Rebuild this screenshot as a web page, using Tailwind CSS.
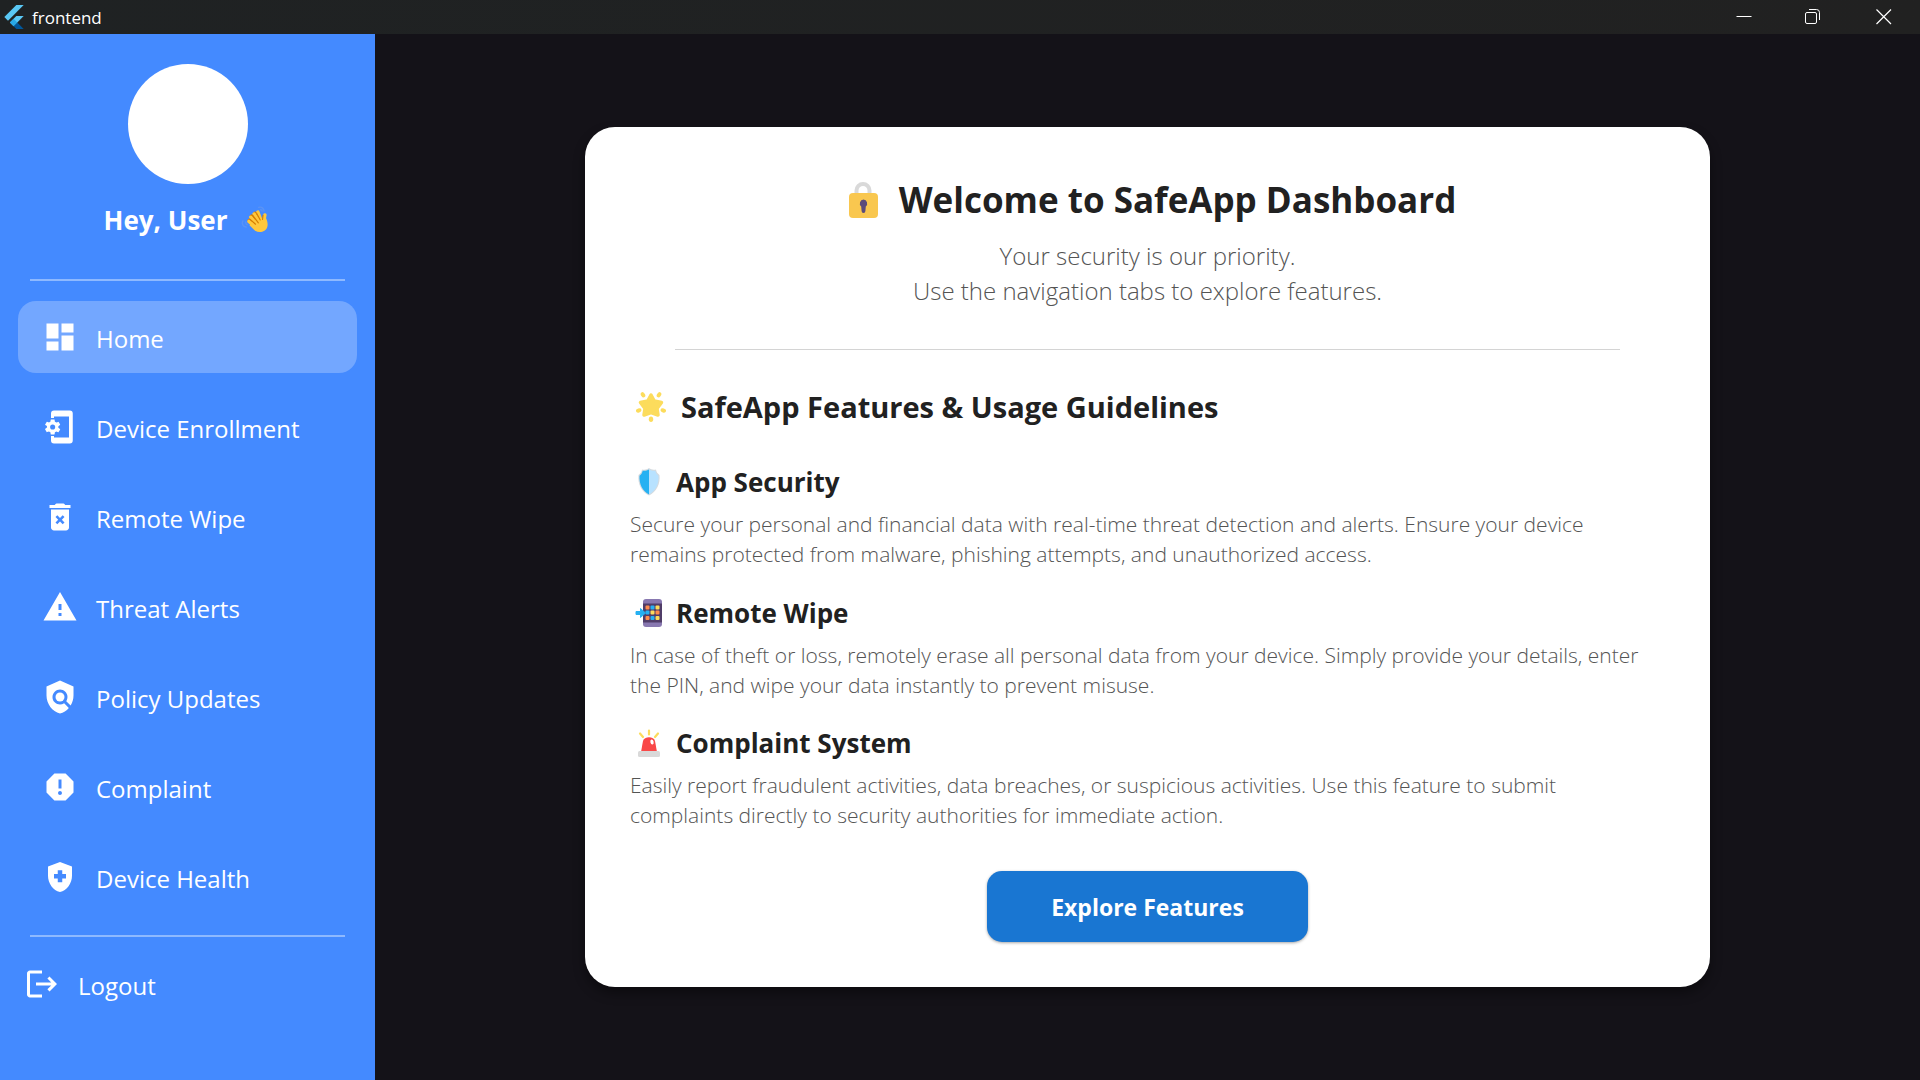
<!DOCTYPE html>
<html lang="en">
<head>
<meta charset="utf-8">
<title>frontend</title>
<script src="https://cdn.jsdelivr.net/npm/@tailwindcss/browser@4"></script>
</head>
<body class="flex min-h-screen flex-col bg-[#141218] font-['Open_Sans','Noto_Sans',sans-serif]">

<header class="flex h-[34px] shrink-0 items-center justify-between bg-linear-to-r from-[#1f2223] to-[#212121] text-white">
  <div class="flex items-center gap-1.5 pl-0.5">
    <svg class="size-6" viewBox="0 0 24 24"><path fill="#5ac8f5" d="M14.3 0 2.3 12 6 15.7 21.7 0z"/><path fill="#5ac8f5" d="M14.3 11.1 7.9 17.5l3.7 3.7 10.1-10.1z"/><path fill="#01579b" d="m11.6 21.2 2.7 2.8h7.4l-6.4-6.5z"/><path fill="#29a9e8" d="m7.9 17.5 3.7-3.7 3.7 3.7-3.7 3.7z"/></svg>
    <span class="pt-0.5 text-[17px] leading-6">frontend</span>
  </div>
  <div class="flex h-full">
    <button class="flex w-[69px] items-center justify-center" aria-label="Minimize"><svg class="size-4" viewBox="0 0 16 16"><path stroke="#fff" d="M.5 7.5h15"/></svg></button>
    <button class="flex w-[69px] items-center justify-center" aria-label="Restore"><svg class="size-4" viewBox="0 0 16 16" fill="none" stroke="#fff"><rect x=".5" y="3.500" width="11" height="11" rx="1.5"/><path d="M4 .5h7.500a3 3 0 0 1 3 3V11"/></svg></button>
    <button class="flex w-[73px] items-center justify-center" aria-label="Close"><svg class="size-4" viewBox="0 0 16 16"><path stroke="#fff" stroke-width="1.2" d="m.5.5 14.500 14.500m0-14.500L.5 15"/></svg></button>
  </div>
</header>

<div class="flex flex-1">
  <aside class="flex w-[375px] shrink-0 flex-col bg-[#448aff] text-white">
    <div class="flex flex-col items-center pt-[30px]">
      <div class="size-[120px] rounded-full bg-white"></div>
      <p class="mt-[18px] flex items-center gap-[14px] text-[26px] leading-9 font-bold">Hey, User
        <svg class="size-[30px]" viewBox="0 0 32 32"><path fill="none" stroke="#5a93f5" stroke-width="1.500" stroke-linecap="round" d="M19 2.500c3-1 5.500 1 5.500 4M21 5c1 0 1.500.5 1.500 1.500M2 17c-1.500 3 0 6 3.500 6.500M5 18c0 1.500.5 2.500 1.500 3"/><g stroke="#d67d00" stroke-width="4" stroke-linecap="round"><path d="m9 16.500 8 6M11.500 12l7 9M15 9l6 11"/></g><g stroke="#ffc83d" stroke-width="3.600" stroke-linecap="round"><path d="m8.500 17.500 8 7M10.500 13l7.500 9.500M14 9.500l6.500 11M18 7.500l4.500 12M25.500 10.500 24 19"/></g><path fill="#ffc83d" d="m14 16 8 .5 4.500-3c1.500 3 2.500 7 1.500 10-1.500 5-8 7-13 4l-6-6z"/><path fill="none" stroke="#d67d00" stroke-width="1.200" stroke-linecap="round" d="m9.500 15 6 5.500M12.500 11l6 8M16.500 8.500l4 7.500M23.500 11l-.5 4.500"/></svg>
      </p>
    </div>
    <hr class="mx-[30px] mt-[41px] mb-5 border-0 border-t-2 border-white/40">
    <nav class="flex flex-col gap-[18px] px-[18px] text-[24px]">
      <a href="#" class="flex h-[72px] items-center gap-[18px] rounded-[18px] bg-white/25 px-6">
        <svg class="size-9" viewBox="0 0 24 24" fill="currentColor"><path d="M3 13h8V3H3v10zm0 8h8v-6H3v6zm10 0h8V11h-8v10zm0-18v6h8V3h-8z"/></svg><span class="pt-1">Home</span></a>
      <a href="#" class="flex h-[72px] items-center gap-[18px] px-6">
        <svg class="size-9" viewBox="0 0 24 24" fill="currentColor"><path d="M8 1h10.500a2 2 0 0 1 2 2v18a2 2 0 0 1-2 2H8a2 2 0 0 1-2-2v-3h2v1h10V5H8v1H6V3a2 2 0 0 1 2-2z"/><path fill-rule="evenodd" transform="translate(-.9)" d="M11.800 12.500v-1l1.100-.8c.1-.1.1-.2.1-.3l-1-1.700c-.1-.1-.2-.2-.3-.1l-1.300.4c-.3-.2-.6-.4-.9-.5l-.2-1.300c0-.1-.1-.2-.3-.2H7c-.1 0-.2.1-.3.2l-.2 1.300c-.3.1-.6.3-.9.5l-1.300-.5c-.1 0-.2 0-.3.1l-1 1.700c-.1.1 0 .2.1.3l1.100.8v1l-1.100.8c-.1.2-.1.3-.1.4l1 1.700c.1.1.2.2.3.1l1.300-.4c.3.2.6.4.9.5l.2 1.300c0 .1.1.2.3.2h2c.1 0 .2-.1.3-.2l.2-1.300c.3-.1.6-.3.9-.5l1.300.5c.1 0 .2 0 .3-.1l1-1.700c.1-.1 0-.2-.1-.3zM8 13.700a1.700 1.700 0 1 1 0-3.400 1.700 1.700 0 0 1 0 3.400z"/></svg><span class="pt-1">Device Enrollment</span></a>
      <a href="#" class="flex h-[72px] items-center gap-[18px] px-6">
        <svg class="size-9" viewBox="0 0 24 24" fill="currentColor"><path fill-rule="evenodd" d="M6 19c0 1.100.9 2 2 2h8c1.100 0 2-.9 2-2V7H6zm3-7 1.200-1.200L12 12.600l1.800-1.800L15 12l-1.800 1.800 1.800 1.800-1.200 1.200-1.800-1.800-1.800 1.800L9 15.600l1.800-1.800zM15.500 4c-.6-.7-1-1-1.700-1h-3.600c-.7 0-1.100.3-1.700 1H5v2h14V4z"/></svg><span class="pt-1">Remote Wipe</span></a>
      <a href="#" class="flex h-[72px] items-center gap-[18px] px-6">
        <svg class="size-9" viewBox="0 0 24 24" fill="currentColor"><path d="M1 21h22L12 2 1 21zm12-3h-2v-2h2v2zm0-4h-2v-4h2v4z"/></svg><span class="pt-1">Threat Alerts</span></a>
      <a href="#" class="flex h-[72px] items-center gap-[18px] px-6">
        <svg class="size-9" viewBox="0 0 24 24" fill="currentColor"><path d="M21 5l-9-4-9 4v6c0 5.550 3.840 10.740 9 12 2.300-.56 4.330-1.900 5.880-3.710l-3.120-3.120c-1.940 1.290-4.580 1.070-6.290-.64-1.950-1.950-1.950-5.120 0-7.070 1.950-1.950 5.120-1.950 7.070 0 1.710 1.710 1.920 4.350.64 6.290l2.900 2.900C20.290 15.690 21 13.380 21 11V5z"/><circle cx="12" cy="12" r="3"/></svg><span class="pt-1">Policy Updates</span></a>
      <a href="#" class="flex h-[72px] items-center gap-[18px] px-6">
        <svg class="size-9" viewBox="0 0 24 24" fill="currentColor"><path d="M15.730 3H8.270L3 8.270v7.460L8.270 21h7.460L21 15.730V8.270L15.730 3zM12 17.300c-.72 0-1.300-.58-1.300-1.300 0-.72.58-1.300 1.300-1.300.72 0 1.300.58 1.300 1.300 0 .72-.58 1.300-1.300 1.300zm1-4.300h-2V7h2v6z"/></svg><span class="pt-1">Complaint</span></a>
      <a href="#" class="flex h-[72px] items-center gap-[18px] px-6">
        <svg class="size-9" viewBox="0 0 24 24" fill="currentColor"><path fill-rule="evenodd" d="M10.500 13H8v-3h2.500V7.500h3V10H16v3h-2.500v2.500h-3V13zM12 2L4 5v6.090c0 5.050 3.410 9.760 8 10.910 4.590-1.150 8-5.860 8-10.910V5l-8-3z"/></svg><span class="pt-1">Device Health</span></a>
    </nav>
    <hr class="mx-[30px] mt-[22px] mb-[11px] border-0 border-t-2 border-white/40">
    <a href="#" class="flex h-[72px] items-center gap-[18px] px-6 text-[24px]">
      <svg class="size-9" viewBox="0 0 24 24" fill="currentColor"><path d="M17 7l-1.410 1.410L18.170 11H8v2h10.170l-2.580 2.580L17 17l5-5zM4 5h8V3H4c-1.100 0-2 .9-2 2v14c0 1.100.9 2 2 2h8v-2H4V5z"/></svg><span class="pt-1">Logout</span></a>
  </aside>

  <main class="flex flex-1 items-center justify-center">
    <section class="flex w-full max-w-[1125px] flex-col rounded-[30px] bg-white p-[45px] text-[#212121] shadow-[0_6px_12px_rgba(0,0,0,0.4)]">
      <h1 class="flex items-center justify-center gap-5 text-[35px] leading-[56px] font-bold">
        <svg class="ml-2 h-9 w-8" viewBox="0 0 32 36"><path fill="none" stroke="#d9d9d9" stroke-width="4" d="M9.500 14V8.500a6.500 6.500 0 0 1 13 0V14"/><rect x="2" y="11" width="29" height="25" rx="4" fill="#f9c74f"/><path fill="#5b4b7a" d="M16.500 17.500a4 4 0 0 1 2.300 7l-.4 4.500a1.900 1.900 0 0 1-3.800 0l-.4-4.500a4 4 0 0 1 2.300-7z"/></svg>Welcome to SafeApp Dashboard</h1>
      <p class="mt-2.5 text-center text-[24px] leading-[35px] font-light text-[#545454]">Your security is our priority.<br>Use the navigation tabs to explore features.</p>
      <hr class="mx-[45px] mt-[41px] border-0 border-t border-[#d4d4d4]">
      <h2 class="mt-[37px] flex items-center gap-[15px] pl-1.5 text-[29px] leading-10 font-bold">
        <svg class="size-[30px]" viewBox="0 0 30 30"><path fill="#fcdc5c" stroke="#fcdc5c" stroke-width="3.500" stroke-linejoin="round" d="m15 3 3.200 6 7.300 1.500-4.500 6 1 6.500-7-2.500L8 23l1-6.500-4.500-6L11.800 9z"/><g fill="#fcdc5c"><ellipse cx="7" cy="2.800" rx="2" ry="2.800" transform="rotate(-35 7 2.800)"/><ellipse cx="23" cy="2.800" rx="2" ry="2.800" transform="rotate(35 23 2.800)"/><ellipse cx="2.700" cy="18.500" rx="2.800" ry="2" transform="rotate(-15 2.700 18.500)"/><ellipse cx="27.300" cy="18.500" rx="2.800" ry="2" transform="rotate(15 27.300 18.500)"/><ellipse cx="15" cy="27.300" rx="2.200" ry="2.700"/></g></svg>SafeApp Features &amp; Usage Guidelines</h2>

      <h3 class="mt-[37px] flex items-center gap-[13px] pl-[5px] text-[26px] leading-9 font-bold">
        <svg class="size-7" viewBox="0 0 28 28"><path fill="#d5dbe0" d="M14 0c2 1.500 4 2 7 1.500.5 2.500 1.500 4 3.500 5.500 1 9-3 17-10.500 20.500C6.500 24 2.500 16 3.500 7 5.500 5.500 6.500 4 7 1.500 10 2 12 1.500 14 0z"/><path fill="#26b1f2" d="M14 1.500c-2 1.200-4 1.400-6.300 1.200C7.200 5 6.200 6.500 4.500 7.700 4 16 7.500 23 14 26.500z"/><path fill="#b8e2ff" d="M14 1.500c2 1.200 4 1.400 6.300 1.200.5 2.300 1.500 3.800 3.200 5C24 16 20.500 23 14 26.500z"/></svg>App Security</h3>
      <p class="mt-[9px] text-[21px] leading-[30px] font-light text-[#545454]">Secure your personal and financial data with real-time threat detection and alerts. Ensure your device remains protected from malware, phishing attempts, and unauthorized access.</p>

      <h3 class="mt-[26px] flex items-center gap-[13px] pl-[5px] text-[26px] leading-9 font-bold">
        <svg class="size-7" viewBox="0 0 28 28"><rect x="8" width="19" height="28" rx="3" fill="#8878b0"/><path fill="#503d68" d="M8 4.500h19v19H8z"/><g fill="#ff8c4b"><rect x="10.500" y="6.500" width="4" height="4" rx="1"/><rect x="20.500" y="11.500" width="4" height="4" rx="1"/><rect x="10.500" y="17" width="4" height="4" rx="1"/></g><g fill="#26b1f2"><rect x="15.500" y="6.500" width="4" height="4" rx="1"/><rect x="10.500" y="11.500" width="4" height="4" rx="1"/><rect x="15.500" y="17" width="4" height="4" rx="1"/><path d="M1 12.500h4.500V9.500l5 4.500-5 4.500v-3H1z" stroke="#26b1f2" stroke-linejoin="round"/></g><g fill="#fcdc5c"><rect x="20.500" y="6.500" width="4" height="4" rx="1"/><rect x="15.500" y="11.500" width="4" height="4" rx="1"/><rect x="20.500" y="17" width="4" height="4" rx="1"/></g></svg>Remote Wipe</h3>
      <p class="mt-[9px] text-[21px] leading-[30px] font-light text-[#545454]">In case of theft or loss, remotely erase all personal data from your device. Simply provide your details, enter the PIN, and wipe your data instantly to prevent misuse.</p>

      <h3 class="mt-[25px] flex items-center gap-[13px] pl-[5px] text-[26px] leading-9 font-bold">
        <svg class="size-7" viewBox="0 0 28 28"><g stroke="#fcdc5c" stroke-width="2.200" stroke-linecap="round"><path d="M14 1.500v4M5 4.500l3 3.500M23 4.500 20 8"/></g><path fill="#f94848" d="M6 23 8 12c1-5 11-5 12 0l2 11z"/><ellipse cx="17" cy="13" rx="1.600" ry="2.500" fill="#fff" transform="rotate(-15 17 13)"/><rect x="3" y="22" width="22" height="6" rx="1.500" fill="#d9d9d9"/></svg>Complaint System</h3>
      <p class="mt-[9px] text-[21px] leading-[30px] font-light text-[#545454]">Easily report fraudulent activities, data breaches, or suspicious activities. Use this feature to submit<br>complaints directly to security authorities for immediate action.</p>

      <button class="mt-[41px] h-[71px] w-[321px] self-center rounded-[15px] bg-[#1976d2] text-[23px] leading-8 font-bold text-white shadow-[0_1px_3px_rgba(0,0,0,0.35)]">Explore Features</button>
    </section>
  </main>
</div>
</body>
</html>
